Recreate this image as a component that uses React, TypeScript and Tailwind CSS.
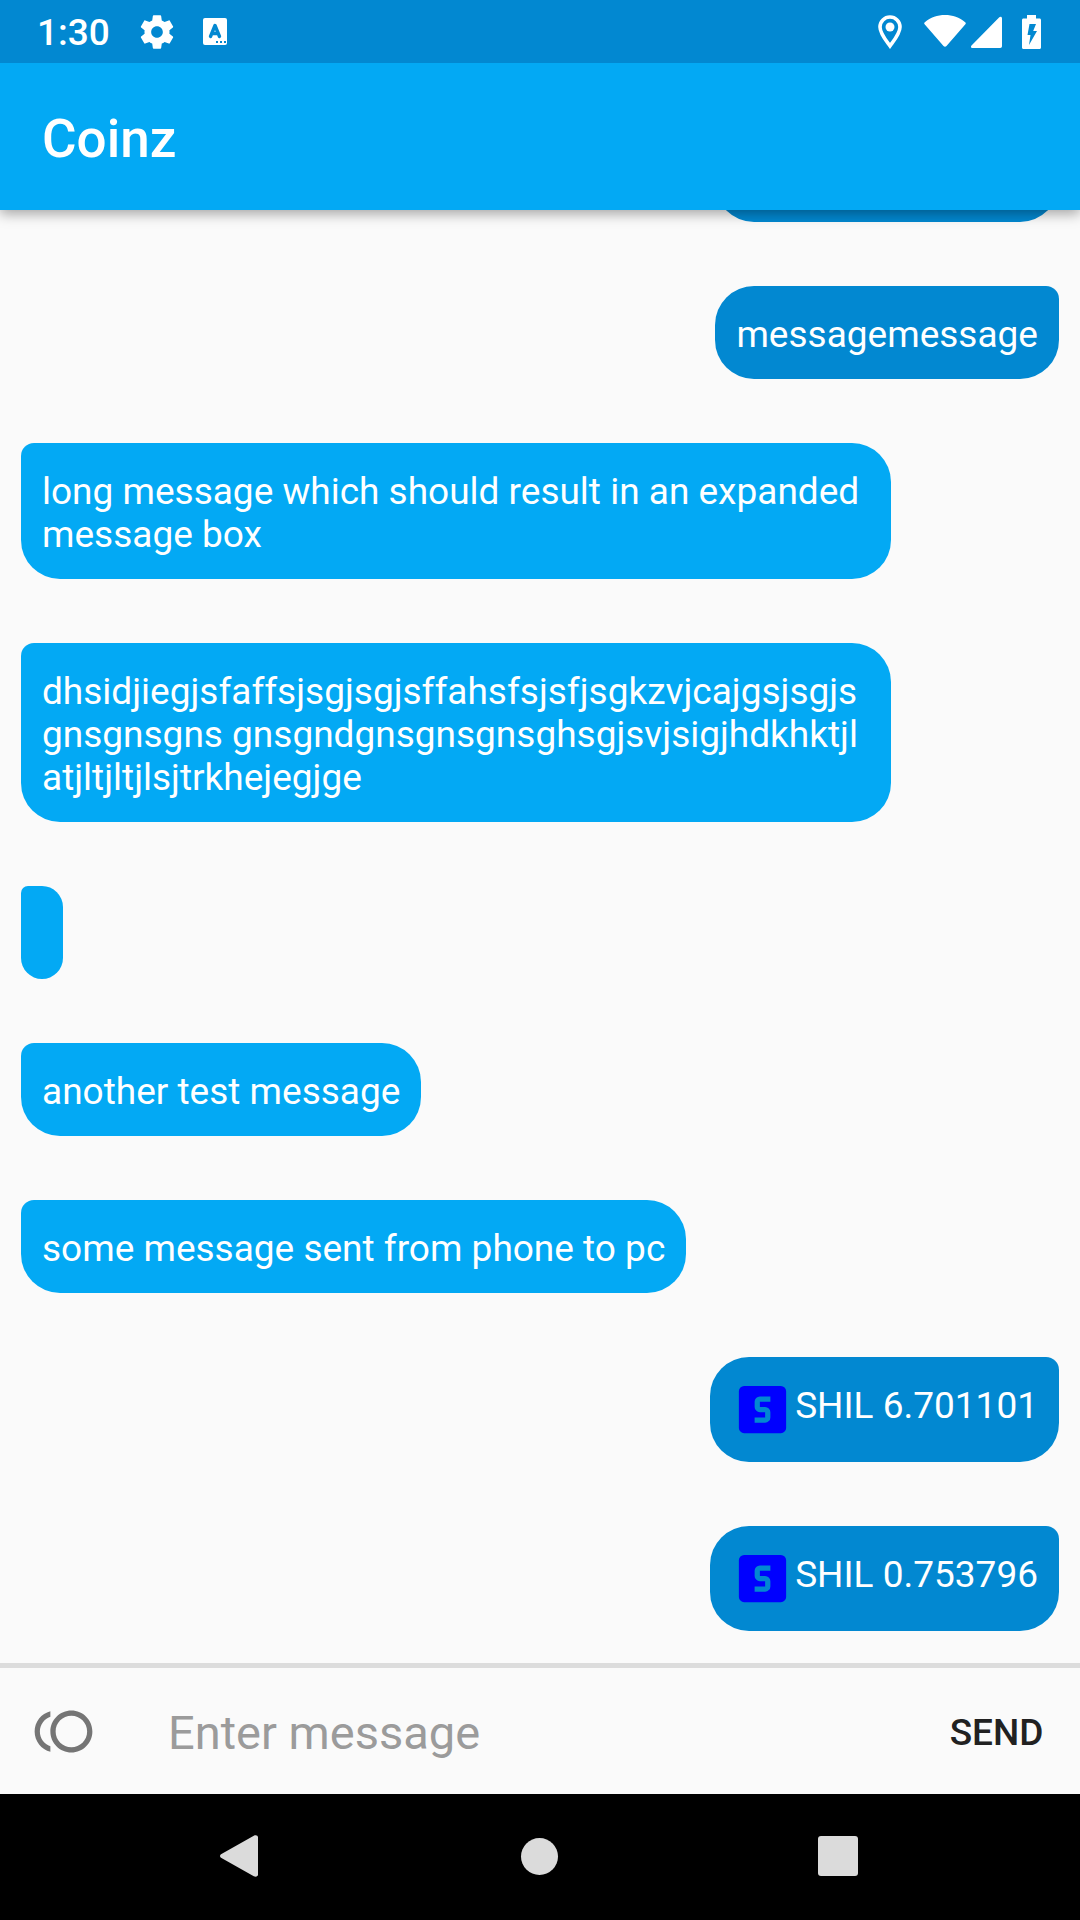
type Message = {
  side: 'in' | 'out';
  kind: 'text' | 'wide' | 'coin' | 'blank';
  text: string;
};

const messages: Message[] = [
  { side: 'out', kind: 'blank', text: '' },
  { side: 'out', kind: 'text', text: 'messagemessage' },
  { side: 'in', kind: 'wide', text: 'long message which should result in an expanded message box' },
  {
    side: 'in',
    kind: 'wide',
    text: 'dhsidjiegjsfaffsjsgjsgjsffahsfsjsfjsgkzvjcajgsjsgjs\ngnsgnsgns gnsgndgnsgnsgnsghsgjsvjsigjhdkhktjl\natjltjltjlsjtrkhejegjge',
  },
  { side: 'in', kind: 'text', text: '' },
  { side: 'in', kind: 'text', text: 'another test message' },
  { side: 'in', kind: 'text', text: 'some message sent from phone to pc' },
  { side: 'out', kind: 'coin', text: 'SHIL 6.701101' },
  { side: 'out', kind: 'coin', text: 'SHIL 0.753796' },
];

function StatusBar() {
  return (
    <div className="relative z-20 flex h-[63px] shrink-0 items-center justify-between bg-[#0288d1] pr-[39px] pl-[37px] text-white">
      <div className="flex items-center">
        <span className="mr-[27px] pt-[2px] text-[37px] leading-[43px] font-medium">1:30</span>
        <svg className="mr-[26px] size-10" viewBox="0 0 24 24" fill="currentColor" aria-hidden="true">
          <path d="M19.43 12.98c.04-.32.07-.64.07-.98s-.03-.66-.07-.98l2.11-1.65c.19-.15.24-.42.12-.64l-2-3.46c-.12-.22-.39-.3-.61-.22l-2.49 1c-.52-.4-1.08-.73-1.69-.98l-.38-2.65C14.46 2.18 14.25 2 14 2h-4c-.25 0-.46.18-.49.42l-.38 2.65c-.61.25-1.17.59-1.69.98l-2.49-1c-.23-.09-.49 0-.61.22l-2 3.46c-.13.22-.07.49.12.64l2.11 1.65c-.04.32-.07.65-.07.98s.03.66.07.98l-2.11 1.65c-.19.15-.24.42-.12.64l2 3.46c.12.22.39.3.61.22l2.49-1c.52.4 1.08.73 1.69.98l.38 2.65c.03.24.24.42.49.42h4c.25 0 .46-.18.49-.42l.38-2.65c.61-.25 1.17-.59 1.69-.98l2.49 1c.23.09.49 0 .61-.22l2-3.46c.12-.22.07-.49-.12-.64l-2.11-1.65zM12 15.5c-1.93 0-3.5-1.57-3.5-3.5s1.57-3.5 3.5-3.5 3.5 1.57 3.5 3.5-1.57 3.5-3.5 3.5z" />
        </svg>
        <svg className="h-[27px] w-6" viewBox="0 0 24 27" fill="none" aria-hidden="true">
          <rect width="24" height="27" rx="2" fill="currentColor" />
          <path d="M7.500 18.500 12 7.500l4.500 11M9 15.500h6" stroke="#0288d1" strokeWidth="3.400" strokeLinecap="round" strokeLinejoin="round" />
          <path d="M13 23h2v2h-2zM17 23h2v2h-2zM21 23h2v2h-2z" fill="#0288d1" />
        </svg>
      </div>
      <div className="flex items-center">
        <svg className="mr-[22px] h-[34px] w-6" viewBox="0 0 24 34" fill="none" aria-hidden="true">
          <path d="M12 31C8 25.500 2 18.500 2 12a10 10 0 0 1 20 0c0 6.500-6 13.500-10 19z" stroke="currentColor" strokeWidth="3.600" />
          <circle cx="12" cy="12" r="4.500" fill="currentColor" />
        </svg>
        <svg className="mr-[5px] h-[34px] w-[42px]" viewBox="0 0 42 34" fill="currentColor" aria-hidden="true">
          <path d="M.8 7.200C6.500 2.500 13.500 0 21 0s14.500 2.500 20.200 7.200c.7.600.8 1.400.2 2.100L22.500 31c-.9 1-2.100 1-3 0L.6 9.300c-.6-.7-.5-1.500.2-2.100z" />
        </svg>
        <svg className="mr-5 h-[34px] w-[31px]" viewBox="0 0 31 34" fill="currentColor" aria-hidden="true">
          <path d="M31 3.500V31c0 1.200-.6 2-1.800 2H1.500C0 33-.5 31.500.5 30.500L28.300 2.300c1.200-1.200 2.700-.6 2.700 1.200z" />
        </svg>
        <svg className="h-[34px] w-[19px]" viewBox="0 0 19 34" fill="currentColor" aria-hidden="true">
          <path fillRule="evenodd" d="M5 0h9v3.500h3.500c.9 0 1.500.6 1.500 1.500v27.500c0 .9-.6 1.500-1.500 1.500h-16C.6 34 0 33.400 0 32.500V5c0-.9.600-1.500 1.500-1.500H5zM7.500 9 5.500 20h3L7 30l8-14h-3.800L14 9z" />
        </svg>
      </div>
    </div>
  );
}

function CoinIcon() {
  return (
    <svg className="size-[63px] shrink-0" viewBox="0 0 24 24" fill="#0000ff" aria-hidden="true">
      <path d="M5 3H19A2 2 0 0 1 21 5V19A2 2 0 0 1 19 21H5A2 2 0 0 1 3 19V5A2 2 0 0 1 5 3M11 7A2 2 0 0 0 9 9V11A2 2 0 0 0 11 13H13V15H9V17H13A2 2 0 0 0 15 15V13A2 2 0 0 0 13 11H11V9H15V7H11Z" />
    </svg>
  );
}

const sideStyles = {
  in: 'self-start rounded-[39px] rounded-tl-[13px] bg-[#03a9f4]',
  out: 'self-end rounded-[39px] rounded-tr-[13px] bg-[#0288d1]',
};

const kindStyles = {
  text: 'pt-[27px] pb-[23px]',
  wide: 'w-[870px] max-w-full pt-[27px] pb-[23px]',
  coin: 'flex gap-px py-[21px]',
  blank: 'w-[344px] pt-[27px] pb-[23px]',
};

function Bubble({ message }: { message: Message }) {
  return (
    <li className={`shrink-0 px-[21px] ${sideStyles[message.side]} ${kindStyles[message.kind]}`}>
      {message.kind === 'coin' && <CoinIcon />}
      <p className={message.kind === 'coin' ? 'pt-[6px]' : 'min-h-[43px] whitespace-pre-line'}>{message.text}</p>
    </li>
  );
}

export default function App() {
  return (
    <div className="flex h-screen flex-col overflow-hidden bg-[#fafafa] font-[Roboto,sans-serif]">
      <StatusBar />
      <header className="relative z-10 flex h-[147px] shrink-0 items-center bg-[#03a9f4] px-[42px] pt-1 shadow-[0_4px_12px_rgba(0,0,0,0.34)]">
        <h1 className="text-[53px] leading-[62px] font-medium text-white">Coinz</h1>
      </header>
      <main className="flex min-h-0 flex-1 flex-col justify-end overflow-hidden">
        <ul className="flex flex-col gap-16 px-[21px] pb-8 text-[37px] leading-[43px] text-white">
          {messages.map((message, i) => (
            <Bubble key={i} message={message} />
          ))}
        </ul>
      </main>
      <form className="flex h-[131px] shrink-0 items-stretch border-t-[5px] border-[#dcdcdc]" onSubmit={(e) => e.preventDefault()}>
        <button type="button" aria-label="Attach coins" className="flex w-[126px] items-center justify-center text-[#757575]">
          <svg className="size-[63px]" viewBox="0 0 24 24" fill="currentColor" aria-hidden="true">
            <path d="M15 4c-4.420 0-8 3.580-8 8s3.580 8 8 8 8-3.580 8-8-3.580-8-8-8zm0 14c-3.310 0-6-2.690-6-6s2.690-6 6-6 6 2.690 6 6-2.690 6-6 6zM3 12c0-2.610 1.670-4.830 4-5.650V4.260C3.550 5.150 1 8.270 1 12s2.550 6.850 6 7.740v-2.090c-2.330-.82-4-3.040-4-5.650z" />
          </svg>
        </button>
        <input
          type="text"
          aria-label="Enter message"
          placeholder="Enter message"
          className="min-w-0 flex-1 bg-transparent px-[42px] pt-1 text-[47px] text-[#212121] outline-none placeholder:text-[#9b9b9b]"
        />
        <button type="submit" className="w-[167px] pt-[2px] text-[37px] leading-[43px] font-medium text-[#212121]">
          SEND
        </button>
      </form>
      <nav className="flex h-[126px] shrink-0 items-center justify-center gap-[173px] bg-black pr-[2px] pb-[2px] text-[#dbdbdb]">
        <button type="button" aria-label="Back" className="flex w-[126px] justify-center pr-[2px]">
          <svg className="h-[42px] w-[38px]" viewBox="0 0 38 42" fill="currentColor" aria-hidden="true">
            <path d="M1 19.200 33.800.8C35.800-.3 38 .5 38 2.500v37c0 2-2.200 2.800-4.200 1.700L1 22.800c-1.300-.8-1.300-2.800 0-3.600z" />
          </svg>
        </button>
        <button type="button" aria-label="Home" className="flex w-[126px] justify-center">
          <span className="size-[37px] rounded-full bg-[#dbdbdb]" />
        </button>
        <button type="button" aria-label="Recent apps" className="flex w-[126px] justify-center">
          <span className="size-10 rounded-[3px] bg-[#dbdbdb]" />
        </button>
      </nav>
    </div>
  );
}
